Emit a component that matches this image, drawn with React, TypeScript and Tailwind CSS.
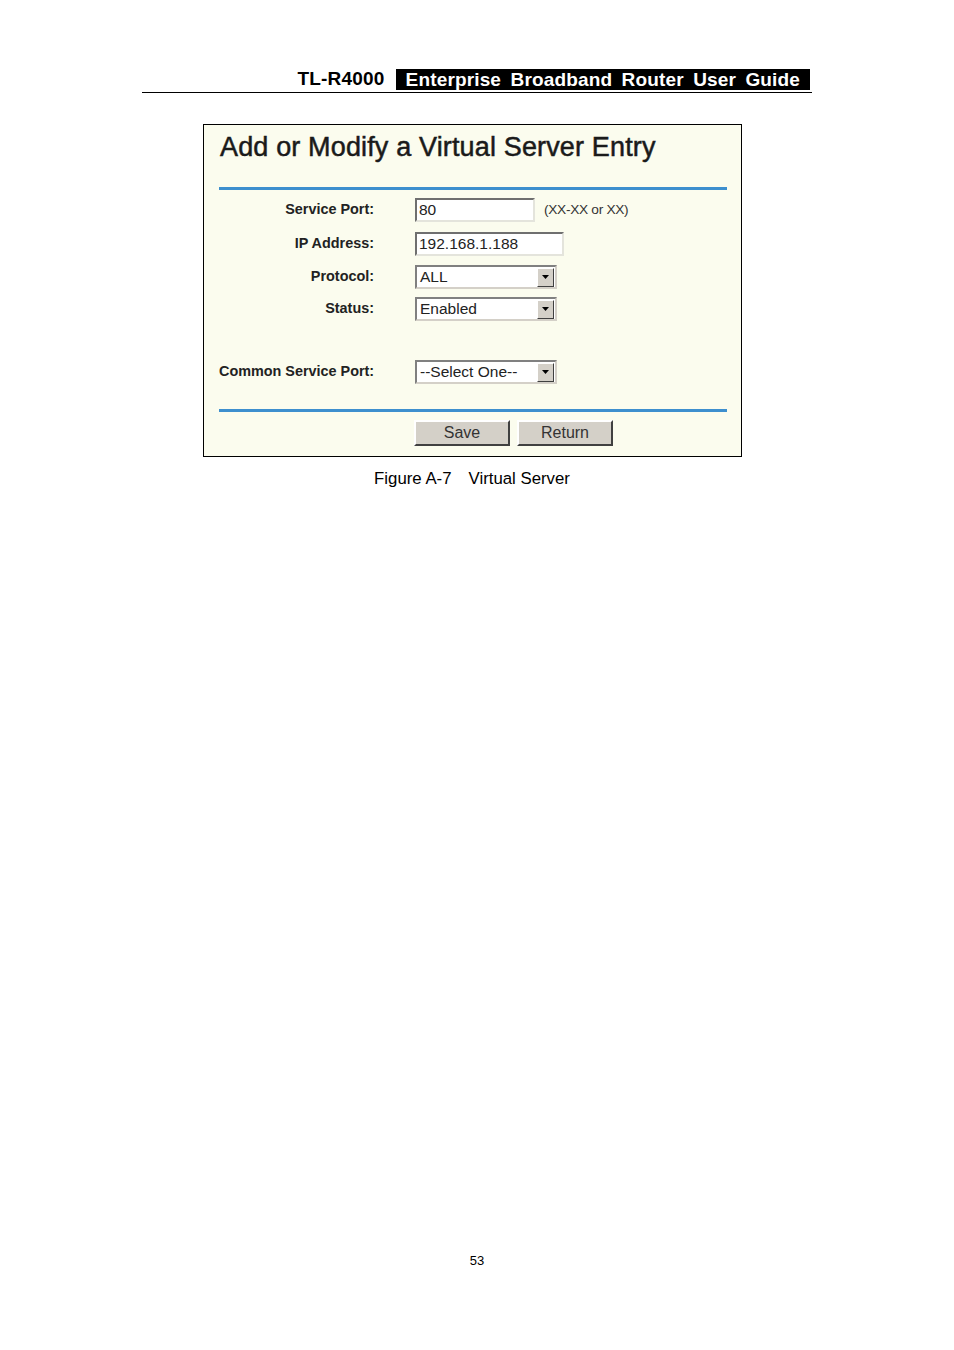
import React from 'react'

function Arrow(){
  return (
    <div className="w-[17px] h-[19px] bg-[#d4d0c8] border border-t-white border-l-white border-r-[#404040] border-b-[#404040] flex items-center justify-center">
      <svg width="7" height="4" viewBox="0 0 7 4"><path d="M0 0h7L3.5 4z" fill="#000" /></svg>
    </div>
  )
}

function Select({ value, w }: { value: string; w: string }){
  return (
    <div className={`${w} h-[24px] bg-white border-2 border-t-[#808080] border-l-[#808080] border-r-[#d4d0c8] border-b-[#d4d0c8] flex items-center justify-between pl-[3px] pr-[1px]`}>
      <span className="text-[15.5px] text-[#222]">{value}</span>
      <Arrow />
    </div>
  )
}

function TextBox({ value, w }: { value: string; w: string }){
  return (
    <div className={`${w} h-[24px] bg-white border-2 border-t-[#6f6f6f] border-l-[#6f6f6f] border-r-[#e4e4dc] border-b-[#e4e4dc] flex items-center pl-[2px]`}>
      <span className="text-[15.5px] text-[#222]">{value}</span>
    </div>
  )
}

function Row({ label, children, className }: { label: string; children: React.ReactNode; className?: string }){
  return (
    <div className={`flex items-center ${className || ''}`}>
      <div className="w-[155px] text-right font-bold text-[14.4px] text-[#222] whitespace-nowrap">{label}</div>
      <div className="ml-[41px] flex items-center">{children}</div>
    </div>
  )
}

function Button({ text }: { text: string }){
  return (
    <div className="w-[96px] h-[26px] bg-[#d4d0c8] border-2 border-t-white border-l-white border-r-[#404040] border-b-[#404040] flex items-center justify-center text-[16px] text-[#333]">
      {text}
    </div>
  )
}

export default function App(){
  return (
    <div className="w-[954px] h-[1350px] bg-white relative font-['Liberation_Sans',Arial,sans-serif] text-black">
      <div className="pt-[68px] px-[142px]">
        <div className="flex items-end justify-end pr-[2px] pb-[2px] border-b border-black">
          <span className="font-bold text-[19px] leading-[22px] mr-[11px] tracking-[0.2px]">TL-R4000</span>
          <span className="bg-black text-white font-bold text-[19px] leading-[21px] px-[10px] tracking-[0.15px] [word-spacing:4px]">Enterprise Broadband Router User Guide</span>
        </div>
      </div>

      <div className="mt-[31px] ml-[203px] w-[539px] h-[333px] border border-black bg-[#fbfcee] pl-[15px] pr-[14px]">
        <div className="text-[27px] text-[#1a1a1a] leading-[30px] pt-[7px] pl-[1px] tracking-[0.15px] [-webkit-text-stroke:0.5px_#1a1a1a]">Add or Modify a Virtual Server Entry</div>
        <div className="mt-[25px] h-[3px] bg-[#3d8fce]" />
        <div className="pt-[8px] flex flex-col">
          <Row label="Service Port:">
            <TextBox value="80" w="w-[120px]" />
            <span className="ml-[9px] text-[13.7px] text-[#333] tracking-[-0.3px]">(XX-XX or XX)</span>
          </Row>
          <Row label="IP Address:" className="mt-[10px]">
            <TextBox value="192.168.1.188" w="w-[149px]" />
          </Row>
          <Row label="Protocol:" className="mt-[9px]">
            <Select value="ALL" w="w-[142px]" />
          </Row>
          <Row label="Status:" className="mt-[8px]">
            <Select value="Enabled" w="w-[142px]" />
          </Row>
          <Row label="Common Service Port:" className="mt-[39px]">
            <Select value="--Select One--" w="w-[142px]" />
          </Row>
        </div>
        <div className="mt-[25px] h-[3px] bg-[#3d8fce]" />
        <div className="flex gap-[7px] ml-[195px] mt-[8px]">
          <Button text="Save" />
          <Button text="Return" />
        </div>
      </div>

      <div className="mt-[9px] flex justify-center text-[16.8px] pr-[10px]">
        <span className="mr-[17px]">Figure A-7</span><span>Virtual Server</span>
      </div>

      <div className="absolute top-[1251px] left-0 w-full text-center text-[13px]">53</div>
    </div>
  )
}
